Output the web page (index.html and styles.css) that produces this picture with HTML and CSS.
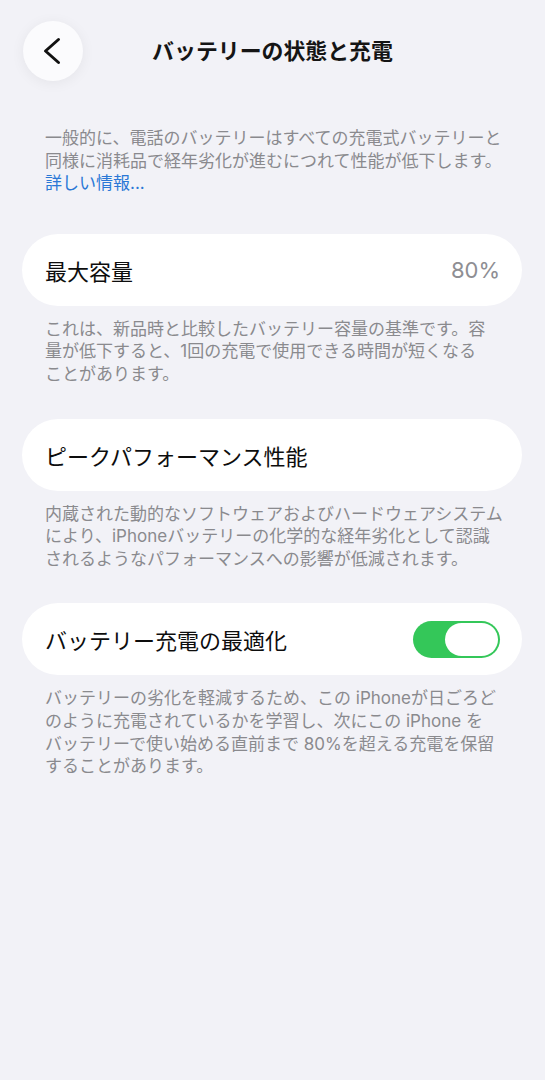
FILE: index.html
```html
<!DOCTYPE html>
<html lang="ja">
<head>
<meta charset="utf-8">
<title>バッテリーの状態と充電</title>
<link rel="stylesheet" href="styles.css">
</head>
<body>
<div class="screen">
  <header class="header">
    <div class="back">
      <svg width="60" height="60" viewBox="0 0 60 60" aria-hidden="true">
        <polyline points="35.5,18.5 22.5,30 35.5,41.5" fill="none" stroke="#111" stroke-width="3" stroke-linecap="round" stroke-linejoin="round"/>
      </svg>
    </div>
    <h1 class="title">バッテリーの状態と充電</h1>
    <div class="spacer"></div>
  </header>

  <main class="content">
    <p class="note intro">一般的に、電話のバッテリーはすべての充電式バッテリーと<br>同様に消耗品で経年劣化が進むにつれて性能が低下します。<br><span class="link">詳しい情報...</span></p>

    <div class="card first">
      <span class="label">最大容量</span>
      <span class="value">80%</span>
    </div>
    <p class="note">これは、新品時と比較したバッテリー容量の基準です。容<br>量が低下すると、1回の充電で使用できる時間が短くなる<br>ことがあります。</p>

    <div class="card">
      <span class="label">ピークパフォーマンス性能</span>
    </div>
    <p class="note">内蔵された動的なソフトウェアおよびハードウェアシステム<br>により、iPhoneバッテリーの化学的な経年劣化として認識<br>されるようなパフォーマンスへの影響が低減されます。</p>

    <div class="card">
      <span class="label">バッテリー充電の最適化</span>
      <span class="toggle"><span class="knob"></span></span>
    </div>
    <p class="note">バッテリーの劣化を軽減するため、この iPhoneが日ごろど<br>のように充電されているかを学習し、次にこの iPhone を<br>バッテリーで使い始める直前まで 80%を超える充電を保留<br>することがあります。</p>
  </main>
</div>
</body>
</html>
```
FILE: styles.css
```css
html, body {
  margin: 0;
  padding: 0;
}
body {
  background: #f2f2f7;
  font-family: "Inter", "Noto Sans CJK JP", sans-serif;
  color: #111;
  width: 545px;
  min-height: 1080px;
}
.screen {
  display: flex;
  flex-direction: column;
}
.header {
  display: grid;
  grid-template-columns: 60px 1fr 60px;
  align-items: center;
  padding: 21px 23px 0 23px;
}
.back {
  width: 60px;
  height: 60px;
  border-radius: 50%;
  background: #fbfbfd;
  box-shadow: 0 2px 14px rgba(0, 0, 0, 0.06);
  display: flex;
}
.title {
  margin: 0;
  text-align: center;
  font-size: 21.9px;
  font-weight: 700;
  line-height: 60px;
  color: #151515;
}
.content {
  display: flex;
  flex-direction: column;
  padding: 0 23px 0 22px;
}
.note {
  margin: 12px 0 0 0;
  padding-left: 23px;
  font-size: 17px;
  line-height: 22.6px;
  color: #8a8a8e;
  white-space: nowrap;
}
.note.intro {
  margin-top: 46px;
}
.link {
  color: #2a78d6;
}
.card {
  display: flex;
  align-items: center;
  justify-content: space-between;
  height: 72px;
  border-radius: 36px;
  background: #ffffff;
  padding: 0 22px 0 23px;
  margin-top: 33px;
}
.card.first {
  margin-top: 39px;
}
.label {
  font-size: 22px;
  color: #0d0d0d;
}
.value {
  font-size: 22px;
  color: #8e8e93;
}
.toggle {
  width: 87px;
  height: 37px;
  border-radius: 19px;
  background: #34c759;
  display: flex;
  align-items: center;
  justify-content: flex-end;
  padding: 0 2px;
  box-sizing: border-box;
}
.knob {
  width: 53px;
  height: 33px;
  border-radius: 17px;
  background: #ffffff;
}
```
